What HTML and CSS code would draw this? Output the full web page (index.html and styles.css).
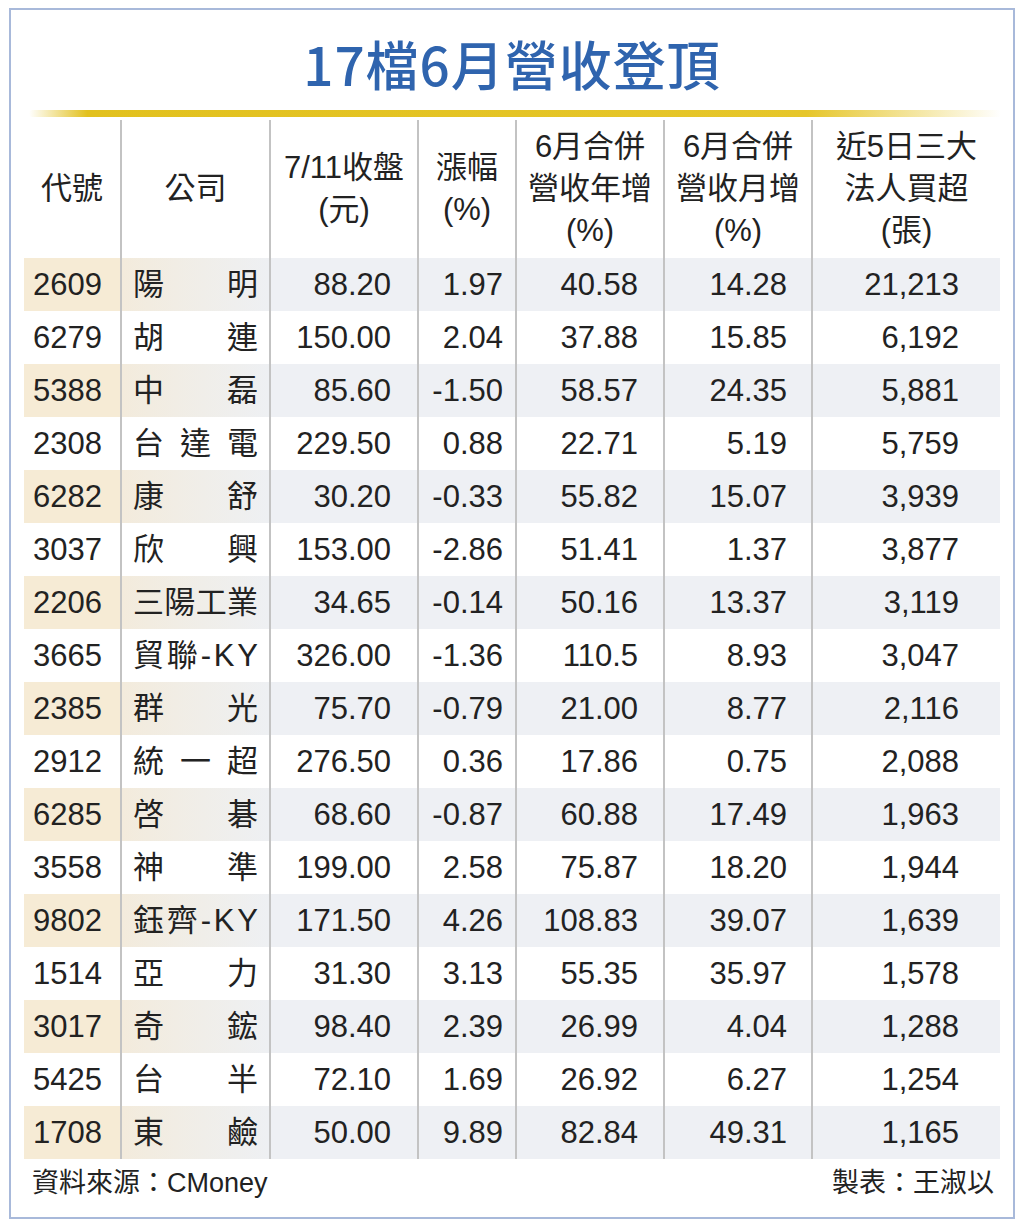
FILE: index.html
```html
<!DOCTYPE html>
<html lang="zh-Hant">
<head>
<meta charset="utf-8">
<title>17檔6月營收登頂</title>
<link rel="stylesheet" href="styles.css">
</head>
<body>
<div class="frame">
  <h1 class="title">17檔6月營收登頂</h1>
  <div class="rule"></div>
  <table class="tbl">
    <colgroup>
      <col class="c1"><col class="c2"><col class="c3"><col class="c4"><col class="c5"><col class="c6"><col class="c7">
    </colgroup>
    <thead>
      <tr>
        <th>代號</th>
        <th>公司</th>
        <th>7/11收盤<br>(元)</th>
        <th>漲幅<br>(%)</th>
        <th>6月合併<br>營收年增<br>(%)</th>
        <th>6月合併<br>營收月增<br>(%)</th>
        <th>近5日三大<br>法人買超<br>(張)</th>
      </tr>
    </thead>
    <tbody>
      <tr><td>2609</td><td class="nm"><div class="jf"><span>陽</span><span>明</span></div></td><td>88.20</td><td>1.97</td><td>40.58</td><td>14.28</td><td>21,213</td></tr>
      <tr><td>6279</td><td class="nm"><div class="jf"><span>胡</span><span>連</span></div></td><td>150.00</td><td>2.04</td><td>37.88</td><td>15.85</td><td>6,192</td></tr>
      <tr><td>5388</td><td class="nm"><div class="jf"><span>中</span><span>磊</span></div></td><td>85.60</td><td>-1.50</td><td>58.57</td><td>24.35</td><td>5,881</td></tr>
      <tr><td>2308</td><td class="nm"><div class="jf"><span>台</span><span>達</span><span>電</span></div></td><td>229.50</td><td>0.88</td><td>22.71</td><td>5.19</td><td>5,759</td></tr>
      <tr><td>6282</td><td class="nm"><div class="jf"><span>康</span><span>舒</span></div></td><td>30.20</td><td>-0.33</td><td>55.82</td><td>15.07</td><td>3,939</td></tr>
      <tr><td>3037</td><td class="nm"><div class="jf"><span>欣</span><span>興</span></div></td><td>153.00</td><td>-2.86</td><td>51.41</td><td>1.37</td><td>3,877</td></tr>
      <tr><td>2206</td><td class="nm"><div class="jf"><span>三</span><span>陽</span><span>工</span><span>業</span></div></td><td>34.65</td><td>-0.14</td><td>50.16</td><td>13.37</td><td>3,119</td></tr>
      <tr><td>3665</td><td class="nm"><div class="jf"><span>貿</span><span>聯</span><span>-</span><span>K</span><span>Y</span></div></td><td>326.00</td><td>-1.36</td><td>110.5</td><td>8.93</td><td>3,047</td></tr>
      <tr><td>2385</td><td class="nm"><div class="jf"><span>群</span><span>光</span></div></td><td>75.70</td><td>-0.79</td><td>21.00</td><td>8.77</td><td>2,116</td></tr>
      <tr><td>2912</td><td class="nm"><div class="jf"><span>統</span><span>一</span><span>超</span></div></td><td>276.50</td><td>0.36</td><td>17.86</td><td>0.75</td><td>2,088</td></tr>
      <tr><td>6285</td><td class="nm"><div class="jf"><span>啓</span><span>碁</span></div></td><td>68.60</td><td>-0.87</td><td>60.88</td><td>17.49</td><td>1,963</td></tr>
      <tr><td>3558</td><td class="nm"><div class="jf"><span>神</span><span>準</span></div></td><td>199.00</td><td>2.58</td><td>75.87</td><td>18.20</td><td>1,944</td></tr>
      <tr><td>9802</td><td class="nm"><div class="jf"><span>鈺</span><span>齊</span><span>-</span><span>K</span><span>Y</span></div></td><td>171.50</td><td>4.26</td><td>108.83</td><td>39.07</td><td>1,639</td></tr>
      <tr><td>1514</td><td class="nm"><div class="jf"><span>亞</span><span>力</span></div></td><td>31.30</td><td>3.13</td><td>55.35</td><td>35.97</td><td>1,578</td></tr>
      <tr><td>3017</td><td class="nm"><div class="jf"><span>奇</span><span>鋐</span></div></td><td>98.40</td><td>2.39</td><td>26.99</td><td>4.04</td><td>1,288</td></tr>
      <tr><td>5425</td><td class="nm"><div class="jf"><span>台</span><span>半</span></div></td><td>72.10</td><td>1.69</td><td>26.92</td><td>6.27</td><td>1,254</td></tr>
      <tr><td>1708</td><td class="nm"><div class="jf"><span>東</span><span>鹼</span></div></td><td>50.00</td><td>9.89</td><td>82.84</td><td>49.31</td><td>1,165</td></tr>
    </tbody>
  </table>
  <div class="foot">
    <span>資料來源：CMoney</span>
    <span>製表：王淑以</span>
  </div>
</div>
</body>
</html>
```
FILE: styles.css
```css
html, body {
  margin: 0;
  padding: 0;
  background: #ffffff;
}

body {
  font-family: "Liberation Sans", "Noto Sans CJK TC", sans-serif;
  color: #222222;
}

.frame {
  margin: 8px 0 0 9px;
  width: 1002px;
  height: 1207px;
  border: 2px solid #a8b9da;
  background: #ffffff;
}

.title {
  margin: 23px 0 0 0;
  height: 60px;
  line-height: 60px;
  text-align: center;
  font-size: 53px;
  font-weight: 500;
  letter-spacing: 1px;
  color: #2f64ae;
  font-family: "Noto Sans CJK TC", "Liberation Sans", sans-serif;
}

.rule {
  margin: 17px 0 0 18px;
  width: 972px;
  height: 7px;
  border-radius: 4px;
  background: linear-gradient(90deg, rgba(230, 196, 30, 0) 0%, #e2c11e 6%, #e6c62a 80%, rgba(230, 196, 30, 0) 100%);
}

.tbl {
  margin: 3px 0 0 13px;
  width: 976px;
  border-collapse: collapse;
  table-layout: fixed;
  font-size: 31px;
}

.c1 { width: 97px; }
.c2 { width: 149px; }
.c3 { width: 148px; }
.c4 { width: 98px; }
.c5 { width: 148px; }
.c6 { width: 148px; }
.c7 { width: 188px; }

.tbl th {
  height: 138px;
  padding: 0;
  font-weight: normal;
  line-height: 42px;
  text-align: center;
  vertical-align: middle;
  white-space: nowrap;
}

.tbl td {
  height: 53px;
  padding: 0;
  line-height: 40px;
  vertical-align: middle;
  white-space: nowrap;
  text-align: right;
}

.tbl th + th,
.tbl td + td {
  border-left: 2px solid #c3c3c3;
}

.tbl td:nth-child(1) {
  text-align: left;
  padding-left: 9px;
}

.tbl td.nm {
  padding: 0 11px 0 11px;
}

.jf {
  display: flex;
  justify-content: space-between;
}

.tbl td:nth-child(3) { padding-right: 26px; }
.tbl td:nth-child(4) { padding-right: 12px; }
.tbl td:nth-child(5) { padding-right: 25px; }
.tbl td:nth-child(6) { padding-right: 24px; }
.tbl td:nth-child(7) { padding-right: 41px; }

.tbl tbody tr:nth-child(odd) td {
  background: #eef0f4;
}

.tbl tbody tr:nth-child(odd) td:nth-child(1) {
  background: #f6ebd5;
}

.tbl tbody tr:nth-child(odd) td:nth-child(2) {
  background: linear-gradient(90deg, #f3ebdc 0%, #f0eee9 55%, #eef0f3 100%);
}

.foot {
  display: flex;
  justify-content: space-between;
  margin: 0 0 0 21px;
  width: 962px;
  height: 48px;
  line-height: 48px;
  font-size: 27px;
}
```
